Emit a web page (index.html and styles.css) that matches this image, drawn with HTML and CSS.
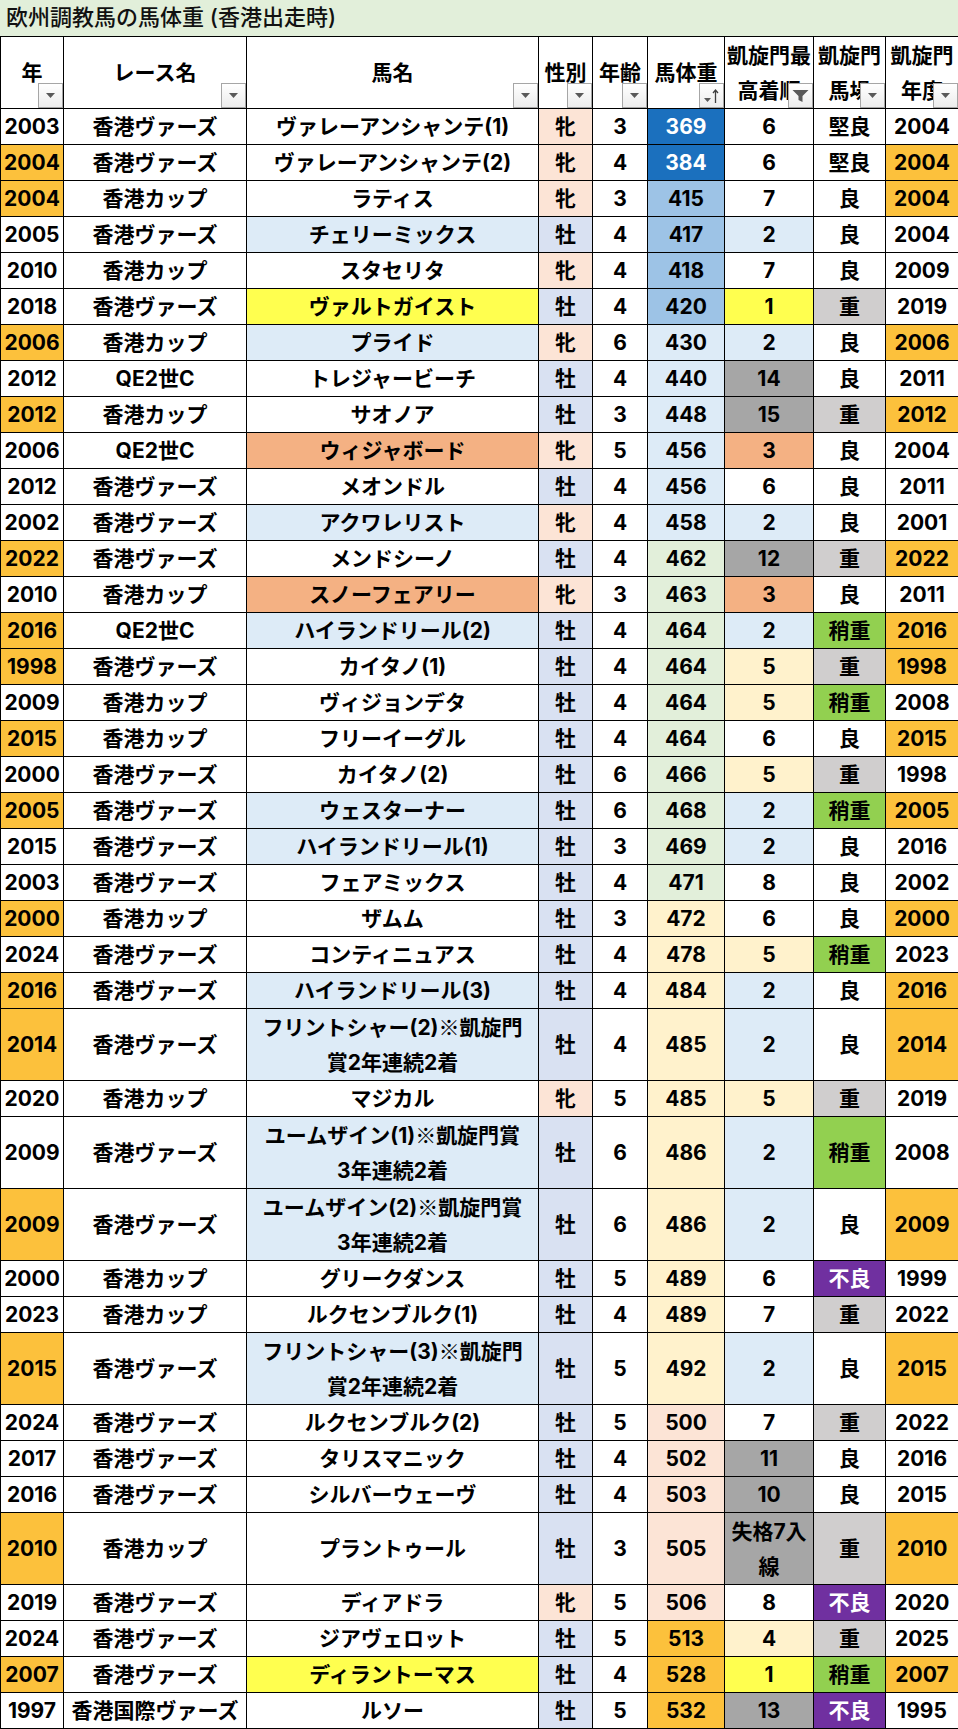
FILE: index.html
```html
<!DOCTYPE html>
<html lang="ja">
<head>
<meta charset="utf-8">
<title>欧州調教馬の馬体重</title>
<link rel="stylesheet" href="styles.css">
</head>
<body>
<div class="sheet">
  <div class="title">欧州調教馬の馬体重 (香港出走時)</div>
  <table class="grid">
    <colgroup>
      <col class="c-year"><col class="c-race"><col class="c-name"><col class="c-sex"><col class="c-age"><col class="c-wt"><col class="c-rank"><col class="c-track"><col class="c-arc">
    </colgroup>
    <thead>
      <tr class="head">
        <th>年<span class="fb"><svg width="9" height="5" viewBox="0 0 9 5"><path d="M0 0h9L4.5 5z" fill="#595959"/></svg></span></th>
        <th>レース名<span class="fb"><svg width="9" height="5" viewBox="0 0 9 5"><path d="M0 0h9L4.5 5z" fill="#595959"/></svg></span></th>
        <th>馬名<span class="fb"><svg width="9" height="5" viewBox="0 0 9 5"><path d="M0 0h9L4.5 5z" fill="#595959"/></svg></span></th>
        <th>性別<span class="fb"><svg width="9" height="5" viewBox="0 0 9 5"><path d="M0 0h9L4.5 5z" fill="#595959"/></svg></span></th>
        <th>年齢<span class="fb"><svg width="9" height="5" viewBox="0 0 9 5"><path d="M0 0h9L4.5 5z" fill="#595959"/></svg></span></th>
        <th>馬体重<span class="fb"><svg width="17" height="16" viewBox="0 0 17 16"><path d="M1 10h7L4.5 14z" fill="#595959"/><path d="M12.5 15V2M10 5l2.5-3 2.5 3" stroke="#404040" stroke-width="1.3" fill="none"/></svg></span></th>
        <th>凱旋門最<br>高着順<span class="fb"><svg width="17" height="14" viewBox="0 0 17 14"><path d="M0.5 1h16l-6 6v6l-4-2V7z" fill="#595959"/></svg></span></th>
        <th>凱旋門<br>馬場<span class="fb"><svg width="9" height="5" viewBox="0 0 9 5"><path d="M0 0h9L4.5 5z" fill="#595959"/></svg></span></th>
        <th>凱旋門<br>年度<span class="fb"><svg width="9" height="5" viewBox="0 0 9 5"><path d="M0 0h9L4.5 5z" fill="#595959"/></svg></span></th>
      </tr>
    </thead>
    <tbody>
      <tr><td>2003</td><td>香港ヴァーズ</td><td>ヴァレーアンシャンテ(1)</td><td class="f">牝</td><td>3</td><td class="w1">369</td><td>6</td><td>堅良</td><td>2004</td></tr>
      <tr><td class="hit">2004</td><td>香港ヴァーズ</td><td>ヴァレーアンシャンテ(2)</td><td class="f">牝</td><td>4</td><td class="w1">384</td><td>6</td><td>堅良</td><td class="hit">2004</td></tr>
      <tr><td class="hit">2004</td><td>香港カップ</td><td>ラティス</td><td class="f">牝</td><td>3</td><td class="w2">415</td><td>7</td><td>良</td><td class="hit">2004</td></tr>
      <tr><td>2005</td><td>香港ヴァーズ</td><td class="p2">チェリーミックス</td><td class="m">牡</td><td>4</td><td class="w2">417</td><td class="p2">2</td><td>良</td><td>2004</td></tr>
      <tr><td>2010</td><td>香港カップ</td><td>スタセリタ</td><td class="f">牝</td><td>4</td><td class="w2">418</td><td>7</td><td>良</td><td>2009</td></tr>
      <tr><td>2018</td><td>香港ヴァーズ</td><td class="p1">ヴァルトガイスト</td><td class="m">牡</td><td>4</td><td class="w2">420</td><td class="p1">1</td><td class="heavy">重</td><td>2019</td></tr>
      <tr><td class="hit">2006</td><td>香港カップ</td><td class="p2">プライド</td><td class="f">牝</td><td>6</td><td class="w3">430</td><td class="p2">2</td><td>良</td><td class="hit">2006</td></tr>
      <tr><td>2012</td><td>QE2世C</td><td>トレジャービーチ</td><td class="m">牡</td><td>4</td><td class="w3">440</td><td class="low">14</td><td>良</td><td>2011</td></tr>
      <tr><td class="hit">2012</td><td>香港カップ</td><td>サオノア</td><td class="m">牡</td><td>3</td><td class="w3">448</td><td class="low">15</td><td class="heavy">重</td><td class="hit">2012</td></tr>
      <tr><td>2006</td><td>QE2世C</td><td class="p3">ウィジャボード</td><td class="f">牝</td><td>5</td><td class="w3">456</td><td class="p3">3</td><td>良</td><td>2004</td></tr>
      <tr><td>2012</td><td>香港ヴァーズ</td><td>メオンドル</td><td class="m">牡</td><td>4</td><td class="w3">456</td><td>6</td><td>良</td><td>2011</td></tr>
      <tr><td>2002</td><td>香港ヴァーズ</td><td class="p2">アクワレリスト</td><td class="f">牝</td><td>4</td><td class="w3">458</td><td class="p2">2</td><td>良</td><td>2001</td></tr>
      <tr><td class="hit">2022</td><td>香港ヴァーズ</td><td>メンドシーノ</td><td class="m">牡</td><td>4</td><td class="w4">462</td><td class="low">12</td><td class="heavy">重</td><td class="hit">2022</td></tr>
      <tr><td>2010</td><td>香港カップ</td><td class="p3">スノーフェアリー</td><td class="f">牝</td><td>3</td><td class="w4">463</td><td class="p3">3</td><td>良</td><td>2011</td></tr>
      <tr><td class="hit">2016</td><td>QE2世C</td><td class="p2">ハイランドリール(2)</td><td class="m">牡</td><td>4</td><td class="w4">464</td><td class="p2">2</td><td class="soft">稍重</td><td class="hit">2016</td></tr>
      <tr><td class="hit">1998</td><td>香港ヴァーズ</td><td>カイタノ(1)</td><td class="m">牡</td><td>4</td><td class="w4">464</td><td class="p5">5</td><td class="heavy">重</td><td class="hit">1998</td></tr>
      <tr><td>2009</td><td>香港カップ</td><td>ヴィジョンデタ</td><td class="m">牡</td><td>4</td><td class="w4">464</td><td class="p5">5</td><td class="soft">稍重</td><td>2008</td></tr>
      <tr><td class="hit">2015</td><td>香港カップ</td><td>フリーイーグル</td><td class="m">牡</td><td>4</td><td class="w4">464</td><td>6</td><td>良</td><td class="hit">2015</td></tr>
      <tr><td>2000</td><td>香港ヴァーズ</td><td>カイタノ(2)</td><td class="m">牡</td><td>6</td><td class="w4">466</td><td class="p5">5</td><td class="heavy">重</td><td>1998</td></tr>
      <tr><td class="hit">2005</td><td>香港ヴァーズ</td><td class="p2">ウェスターナー</td><td class="m">牡</td><td>6</td><td class="w4">468</td><td class="p2">2</td><td class="soft">稍重</td><td class="hit">2005</td></tr>
      <tr><td>2015</td><td>香港ヴァーズ</td><td class="p2">ハイランドリール(1)</td><td class="m">牡</td><td>3</td><td class="w4">469</td><td class="p2">2</td><td>良</td><td>2016</td></tr>
      <tr><td>2003</td><td>香港ヴァーズ</td><td>フェアミックス</td><td class="m">牡</td><td>4</td><td class="w4">471</td><td>8</td><td>良</td><td>2002</td></tr>
      <tr><td class="hit">2000</td><td>香港カップ</td><td>ザムム</td><td class="m">牡</td><td>3</td><td class="w5">472</td><td>6</td><td>良</td><td class="hit">2000</td></tr>
      <tr><td>2024</td><td>香港ヴァーズ</td><td>コンティニュアス</td><td class="m">牡</td><td>4</td><td class="w5">478</td><td class="p5">5</td><td class="soft">稍重</td><td>2023</td></tr>
      <tr><td class="hit">2016</td><td>香港ヴァーズ</td><td class="p2">ハイランドリール(3)</td><td class="m">牡</td><td>4</td><td class="w5">484</td><td class="p2">2</td><td>良</td><td class="hit">2016</td></tr>
      <tr class="tall"><td class="hit">2014</td><td>香港ヴァーズ</td><td class="p2">フリントシャー(2)<span class="cjk">※</span>凱旋門<br>賞2年連続2着</td><td class="m">牡</td><td>4</td><td class="w5">485</td><td class="p2">2</td><td>良</td><td class="hit">2014</td></tr>
      <tr><td>2020</td><td>香港カップ</td><td>マジカル</td><td class="f">牝</td><td>5</td><td class="w5">485</td><td class="p5">5</td><td class="heavy">重</td><td>2019</td></tr>
      <tr class="tall"><td>2009</td><td>香港ヴァーズ</td><td class="p2">ユームザイン(1)<span class="cjk">※</span>凱旋門賞<br>3年連続2着</td><td class="m">牡</td><td>6</td><td class="w5">486</td><td class="p2">2</td><td class="soft">稍重</td><td>2008</td></tr>
      <tr class="tall"><td class="hit">2009</td><td>香港ヴァーズ</td><td class="p2">ユームザイン(2)<span class="cjk">※</span>凱旋門賞<br>3年連続2着</td><td class="m">牡</td><td>6</td><td class="w5">486</td><td class="p2">2</td><td>良</td><td class="hit">2009</td></tr>
      <tr><td>2000</td><td>香港カップ</td><td>グリークダンス</td><td class="m">牡</td><td>5</td><td class="w5">489</td><td>6</td><td class="bad">不良</td><td>1999</td></tr>
      <tr><td>2023</td><td>香港カップ</td><td>ルクセンブルク(1)</td><td class="m">牡</td><td>4</td><td class="w5">489</td><td>7</td><td class="heavy">重</td><td>2022</td></tr>
      <tr class="tall"><td class="hit">2015</td><td>香港ヴァーズ</td><td class="p2">フリントシャー(3)<span class="cjk">※</span>凱旋門<br>賞2年連続2着</td><td class="m">牡</td><td>5</td><td class="w5">492</td><td class="p2">2</td><td>良</td><td class="hit">2015</td></tr>
      <tr><td>2024</td><td>香港ヴァーズ</td><td>ルクセンブルク(2)</td><td class="m">牡</td><td>5</td><td class="w6">500</td><td>7</td><td class="heavy">重</td><td>2022</td></tr>
      <tr><td>2017</td><td>香港ヴァーズ</td><td>タリスマニック</td><td class="m">牡</td><td>4</td><td class="w6">502</td><td class="low">11</td><td>良</td><td>2016</td></tr>
      <tr><td>2016</td><td>香港ヴァーズ</td><td>シルバーウェーヴ</td><td class="m">牡</td><td>4</td><td class="w6">503</td><td class="low">10</td><td>良</td><td>2015</td></tr>
      <tr class="tall"><td class="hit">2010</td><td>香港カップ</td><td>プラントゥール</td><td class="m">牡</td><td>3</td><td class="w6">505</td><td class="low">失格7入<br>線</td><td class="heavy">重</td><td class="hit">2010</td></tr>
      <tr><td>2019</td><td>香港ヴァーズ</td><td>ディアドラ</td><td class="f">牝</td><td>5</td><td class="w6">506</td><td>8</td><td class="bad">不良</td><td>2020</td></tr>
      <tr><td>2024</td><td>香港ヴァーズ</td><td>ジアヴェロット</td><td class="m">牡</td><td>5</td><td class="w7">513</td><td class="p5">4</td><td class="heavy">重</td><td>2025</td></tr>
      <tr><td class="hit">2007</td><td>香港ヴァーズ</td><td class="p1">ディラントーマス</td><td class="m">牡</td><td>4</td><td class="w7">528</td><td class="p1">1</td><td class="soft">稍重</td><td class="hit">2007</td></tr>
      <tr><td>1997</td><td>香港国際ヴァーズ</td><td>ルソー</td><td class="m">牡</td><td>5</td><td class="w7">532</td><td class="low">13</td><td class="bad">不良</td><td>1995</td></tr>
    </tbody>
  </table>
</div>
</body>
</html>
```

FILE: styles.css
```css
html, body {
  margin: 0;
  padding: 0;
  background: #ffffff;
}

body {
  font-family: Inter, "Noto Sans CJK JP", sans-serif;
  color: #000;
}

.sheet {
  width: 958px;
}

.title {
  height: 36px;
  box-sizing: border-box;
  background: #e2efda;
  font-size: 22px;
  line-height: 35px;
  padding-left: 6px;
  font-weight: 500;
  color: #111;
  white-space: nowrap;
}

.cjk {
  font-family: "Noto Sans CJK JP", sans-serif;
}

.grid {
  border-collapse: collapse;
  table-layout: fixed;
  width: 958px;
  font-size: 21px;
  font-weight: 700;
}

.c-year { width: 63px; }
.c-race { width: 183px; }
.c-name { width: 292px; }
.c-sex { width: 54px; }
.c-age { width: 55px; }
.c-wt { width: 77px; }
.c-rank { width: 89px; }
.c-track { width: 72px; }
.c-arc { width: 73px; }

.grid th,
.grid td {
  border: 1px solid #000;
  padding: 0 1px;
  text-align: center;
  vertical-align: middle;
  line-height: 35px;
  white-space: nowrap;
  overflow: hidden;
}

.grid tbody tr { height: 36px; }
.grid tbody tr.tall { height: 72px; }
.grid thead tr.head { height: 72px; }

.grid th {
  position: relative;
  font-weight: 700;
  background: #fff;
}

.fb {
  position: absolute;
  right: 0;
  bottom: 0;
  width: 25px;
  height: 25px;
  box-sizing: border-box;
  border: 1px solid #a6a6a6;
  background: linear-gradient(#ffffff, #ececec);
  display: flex;
  align-items: center;
  justify-content: center;
}

.fb svg { display: block; }

/* 同年 */
.hit { background: #fcc13c; }

/* 性別 */
.f { background: #fce4d6; }
.m { background: #d9e1f2; }

/* 馬体重 */
.w1 { background: #1b70be; color: #fff; }
.w2 { background: #9dc3e6; }
.w3 { background: #ddebf7; }
.w4 { background: #e2efda; }
.w5 { background: #fff2cc; }
.w6 { background: #fce4d6; }
.w7 { background: #fcc13c; }

/* 着順 */
.p1 { background: #ffff4f; }
.p2 { background: #ddebf7; }
.p3 { background: #f4b183; }
.p5 { background: #fff2cc; }
.low { background: #a6a6a6; }

/* 馬場 */
.heavy { background: #d0cece; }
.soft { background: #92d050; }
.bad { background: #7030a0; color: #fff; }
```
